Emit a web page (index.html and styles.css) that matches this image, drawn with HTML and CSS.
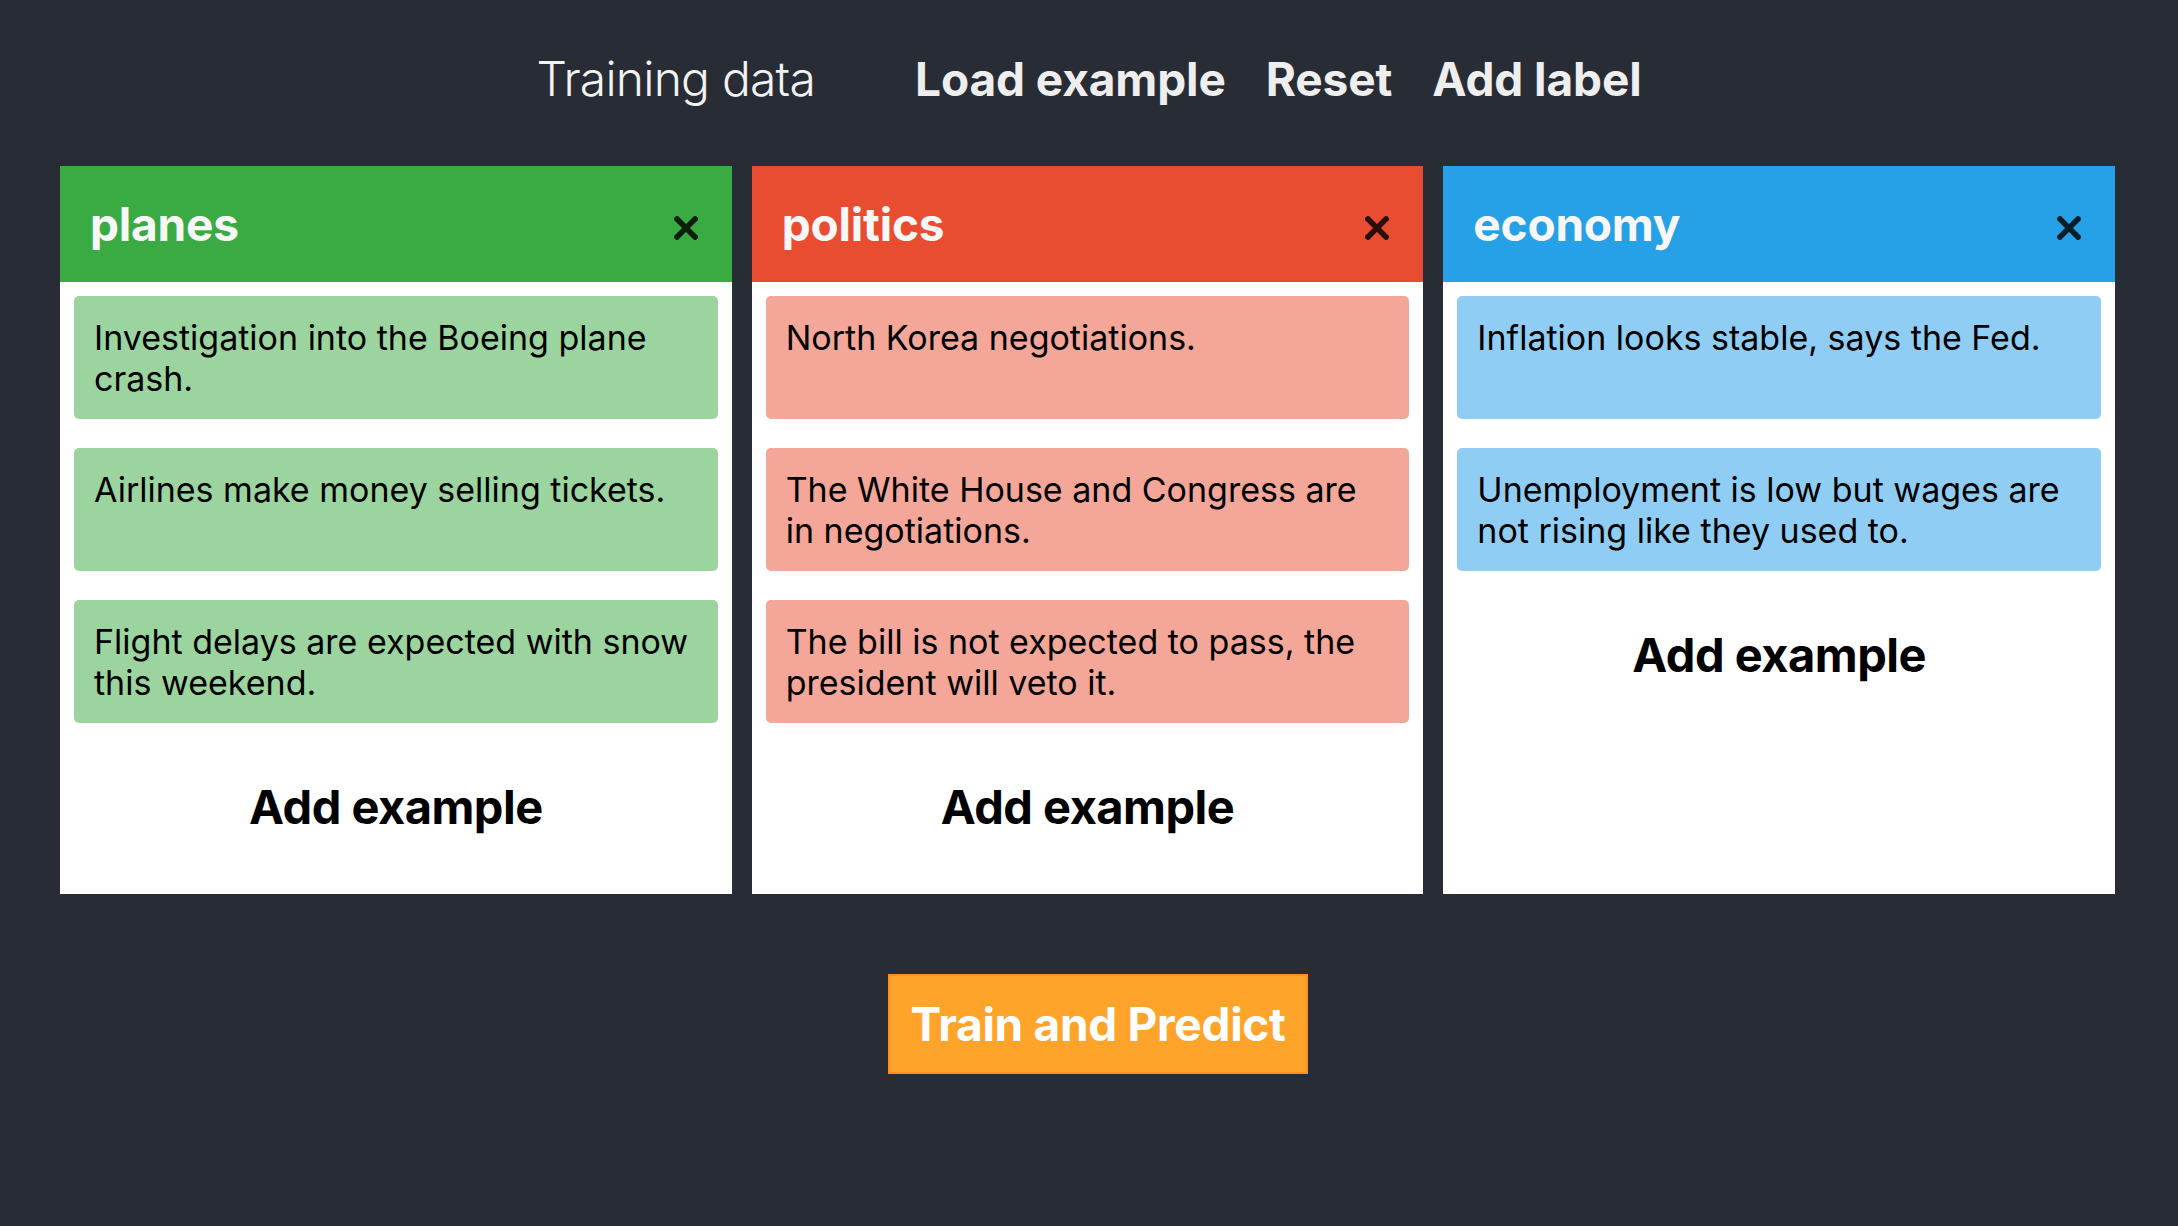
FILE: index.html
```html
<!DOCTYPE html>
<html lang="en">
<head>
<meta charset="utf-8">
<title>Training data</title>
<link rel="stylesheet" href="styles.css">
</head>
<body>
<header class="topbar">
  <h1 class="title">Training data</h1>
  <nav class="actions">
    <button class="nav-btn">Load example</button>
    <button class="nav-btn">Reset</button>
    <button class="nav-btn">Add label</button>
  </nav>
</header>

<main class="labels">
  <section class="card card-green">
    <div class="card-head">
      <h2 class="card-title">planes</h2>
      <button class="close" aria-label="Remove"><svg viewBox="0 0 24 24" width="24" height="24"><path d="M3 3 L21 21 M21 3 L3 21" stroke="currentColor" stroke-width="5.5" stroke-linecap="square"/></svg></button>
    </div>
    <div class="card-body">
      <div class="examples">
        <div class="example">Investigation into the Boeing plane crash.</div>
        <div class="example">Airlines make money selling tickets.</div>
        <div class="example">Flight delays are expected with snow this weekend.</div>
      </div>
      <button class="add-example">Add example</button>
    </div>
  </section>

  <section class="card card-red">
    <div class="card-head">
      <h2 class="card-title">politics</h2>
      <button class="close" aria-label="Remove"><svg viewBox="0 0 24 24" width="24" height="24"><path d="M3 3 L21 21 M21 3 L3 21" stroke="currentColor" stroke-width="5.5" stroke-linecap="square"/></svg></button>
    </div>
    <div class="card-body">
      <div class="examples">
        <div class="example">North Korea negotiations.</div>
        <div class="example">The White House and Congress are in negotiations.</div>
        <div class="example">The bill is not expected to pass, the president will veto it.</div>
      </div>
      <button class="add-example">Add example</button>
    </div>
  </section>

  <section class="card card-blue">
    <div class="card-head">
      <h2 class="card-title">economy</h2>
      <button class="close" aria-label="Remove"><svg viewBox="0 0 24 24" width="24" height="24"><path d="M3 3 L21 21 M21 3 L3 21" stroke="currentColor" stroke-width="5.5" stroke-linecap="square"/></svg></button>
    </div>
    <div class="card-body">
      <div class="examples">
        <div class="example">Inflation looks stable, says the Fed.</div>
        <div class="example">Unemployment is low but wages are not rising like they used to.</div>
      </div>
      <button class="add-example">Add example</button>
    </div>
  </section>
</main>

<div class="train-row">
  <button class="train">Train and Predict</button>
</div>
</body>
</html>
```

FILE: styles.css
```css
* { box-sizing: border-box; }

html, body {
  margin: 0;
  padding: 0;
}

body {
  background: #282c34;
  font-family: Inter, "Noto Sans", sans-serif;
  min-height: 100vh;
}

button {
  font-family: inherit;
  border: none;
  background: none;
  padding: 0;
  margin: 0;
  cursor: pointer;
}

.topbar {
  display: flex;
  justify-content: center;
  align-items: center;
  padding-top: 40px;
  height: 118px;
}

.title {
  margin: 0;
  font-size: 48px;
  font-weight: 300;
  line-height: 78px;
  color: #f2f2f2;
  letter-spacing: -0.8px;
}

.actions {
  display: flex;
  gap: 40px;
  margin-left: 100px;
}

.nav-btn {
  font-size: 46px;
  font-weight: 700;
  color: #eeeeee;
  line-height: 78px;
  letter-spacing: -0.1px;
}

.labels {
  display: flex;
  gap: 20px;
  padding: 0 63px 0 60px;
  margin-top: 48px;
  align-items: stretch;
}

.card {
  flex: 1 1 0;
  background: #ffffff;
  display: flex;
  flex-direction: column;
}

.card-head {
  height: 116px;
  display: flex;
  align-items: center;
  justify-content: space-between;
  padding: 0 34px 0 30px;
}

.card-title {
  margin: 0;
  font-size: 46px;
  font-weight: 700;
  color: #f7f7f7;
  letter-spacing: -0.2px;
}

.close {
  width: 24px;
  height: 24px;
  color: rgba(0, 0, 0, 0.82);
  display: flex;
  margin-top: 7px;
}

.card-body {
  padding: 14px 14px 0;
  display: flex;
  flex-direction: column;
}

.examples {
  display: flex;
  flex-direction: column;
  gap: 29px;
}

.example {
  height: 123px;
  border-radius: 5px;
  padding: 21px 20px 0 20px;
  font-size: 34px;
  line-height: 41px;
  color: #000000;
  letter-spacing: 0;
}

.add-example {
  height: 171px;
  padding-bottom: 5px;
  display: flex;
  align-items: center;
  justify-content: center;
  font-size: 47px;
  font-weight: 700;
  color: #000000;
  letter-spacing: -0.5px;
}

.card-green .card-head { background: #3aaa43; }
.card-green .example { background: #9cd49f; }

.card-red .card-head { background: #e84d31; }
.card-red .example { background: #f4a698; }

.card-blue .card-head { background: #26a0e6; }
.card-blue .example { background: #90cdf4; }

.train-row {
  display: flex;
  justify-content: center;
  margin-top: 80px;
  padding-left: 18px;
}

.train {
  width: 420px;
  height: 100px;
  background: #ffa42b;
  border: 2px solid #ff8f1f;
  color: #ffffff;
  font-size: 46px;
  font-weight: 700;
  letter-spacing: -0.3px;
}
```
